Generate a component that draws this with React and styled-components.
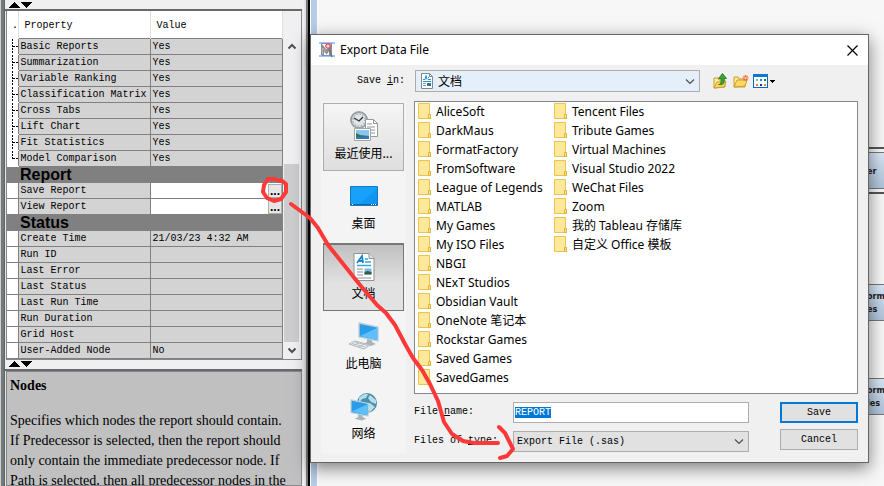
import React, { useEffect, useRef } from 'react';
import styled, { createGlobalStyle, css } from 'styled-components';

const MONO = '"Liberation Mono", monospace';
const UI = '"Noto Sans", "Noto Sans CJK SC", sans-serif';
const CJK = '"Noto Sans CJK SC", sans-serif';

const GlobalStyle = createGlobalStyle`
  *, *::before, *::after { box-sizing: border-box; }
  body { margin: 0; overflow: hidden; background: #f7f7f7; color: #000; font: 10px/16px ${MONO}; }
  button, input, select { margin: 0; padding: 0; font: inherit; color: inherit; border-radius: 0; }
`;

const Workspace = styled.main`
  position: relative;
  display: flex;
  height: 100vh;
  min-height: 480px;
  overflow: hidden;
`;

/* ---------- property panel ---------- */

const SidePanel = styled.aside`
  display: flex;
  flex: 0 0 310px;
  flex-direction: column;
  padding-left: 5px;
  padding-right: 8px;
  background: linear-gradient(90deg, #d0d0d0 0 1px, #747a7a 1px 4px, #5f6464 4px 5px, #e6e6e6 5px 302px, #f4f4f4 303px, #ddd 306px, #777 306px 308px, #000 308px 310px);
`;

const SplitBar = styled.div`
  display: flex;
  flex: none;
  height: 11px;
  padding-left: 3px;
  background: #f0f0f0;
  border-bottom: 2px solid #696969;
`;

const SplitButton = styled.button`
  display: flex;
  align-items: center;
  justify-content: center;
  width: 12px;
  height: 9px;
  border: 0;
  background: none;
`;

const PropertyFrame = styled.section`
  display: flex;
  flex: none;
  margin-left: 1px;
  border: 1px solid #828790;
  border-top: 0;
  background: #f0f0f0;
`;

const PropertyTable = styled.table`
  flex: 1;
  border-collapse: collapse;
  table-layout: fixed;
  background: #fff;
`;

const HeadCell = styled.th`
  height: 27px;
  width: ${(p) => p.$width};
  padding: 4px 0 0 ${(p) => p.$indent};
  border-right: 1px solid #e0e0e0;
  font-weight: normal;
  text-align: left;
  background: #fff;
`;

const Cell = styled.td`
  height: 16px;
  padding: 1px 0 0 1px;
  border: 1px solid #808080;
  line-height: 14px;
  white-space: nowrap;
  background: ${(p) => (p.$white ? '#fff' : '#d3d3d3')};
`;

const GutterCell = styled(Cell)`
  padding: 0;
  border-left: 0;
  border-top-color: ${(p) => (p.$tree ? '#fff' : '#808080')};
  border-bottom-color: ${(p) => (p.$tree ? '#fff' : '#808080')};
  background: #fff;
  svg { display: block; }
`;

const GroupCell = styled.td`
  height: 16px;
  padding: 0 0 0 13px;
  font: bold 16px/15px "Liberation Sans", sans-serif;
  background: #808080;
`;

const ValueLine = styled.div`
  display: flex;
  justify-content: flex-end;
  height: 14px;
`;

const EllipsisButton = styled.button`
  width: 14px;
  height: 14px;
  border: 1px solid #adadad;
  background: #e6e6e6;
  font: bold 12px/8px "Liberation Sans", sans-serif;
`;

const ScrollBar = styled.div`
  display: flex;
  flex: 0 0 18px;
  flex-direction: column;
  padding: 27px 2px 0 1px;
  background: #f0f0f0;
`;

const ScrollButton = styled.button`
  display: flex;
  flex: 0 0 17px;
  align-items: center;
  justify-content: center;
  border: 0;
  background: #f0f0f0;
`;

const ScrollTrack = styled.div`
  display: flex;
  flex: 1;
  flex-direction: column;
  justify-content: flex-end;
`;

const ScrollThumb = styled.div`
  height: 62%;
  background: #cdcdcd;
`;

const HelpText = styled.section`
  flex: 1;
  margin-left: 1px;
  padding: 4px 9px 0 3px;
  overflow: hidden;
  border: 1px solid #828790;
  background: #c0c0c0;
  font: 14px/20px "Liberation Serif", serif;
  h2 { margin: 0 0 15px; font-size: 14px; }
  p { margin: 0; }
`;

/* ---------- diagram canvas ---------- */

const Canvas = styled.section`
  position: relative;
  flex: 1;
  background: linear-gradient(90deg, #fff 0 1px, #b5cde6 1px 7px, #fff 7px 8px, #f7f7f7 8px);
`;

const DiagramNode = styled.div`
  position: absolute;
  right: 0;
  top: ${(p) => p.$top};
  width: 44px;
  height: 37px;
  padding: 5px 0 0 26px;
  border: 1px solid #777;
  border-right: 0;
  background: linear-gradient(#d8e6f5, #afc3da);
  color: #222;
  font: bold 9px/13px "DejaVu Sans Condensed", "DejaVu Sans", sans-serif;
  ${(p) => p.$selected && css`
    padding-top: 12px;
    outline: 2px solid #555;
    outline-offset: 3px;
  `}
`;

/* ---------- dialog ---------- */

const Dialog = styled.section`
  position: absolute;
  left: 310px;
  right: 15px;
  top: 34px;
  border: 1px solid #666;
  background: #f0f0f0;
  box-shadow: 0 5px 16px rgba(0, 0, 0, 0.5);
`;

const TitleBar = styled.header`
  display: flex;
  align-items: center;
  height: 30px;
  padding: 0 8px;
  gap: 5px;
  background: #fff;
  h1 { flex: 1; margin: 0; font: 12px/16px ${UI}; }
`;

const IconButton = styled.button`
  display: flex;
  align-items: center;
  justify-content: center;
  min-width: 16px;
  height: 18px;
  border: 0;
  background: none;
`;

const LocationRow = styled.div`
  display: flex;
  align-items: center;
  padding: 5px 10px 0 10px;
`;

const LocationLabel = styled.label`
  flex: 0 0 94px;
  padding-right: 10px;
  text-align: right;
`;

const ComboBox = styled.div`
  position: relative;
  flex: 1;
  height: ${(p) => (p.$location ? '22px' : '21px')};
  select {
    display: block;
    width: 100%;
    height: 100%;
    padding-left: ${(p) => (p.$location ? '22px' : '3px')};
    appearance: none;
    border: 1px solid #adadad;
    background: ${(p) => (p.$location ? '#e5eff9' : '#e1e1e1')};
    ${(p) => p.$location && css`font: 12px/18px ${CJK};`}
  }
`;

const ComboMark = styled.span`
  position: absolute;
  top: 0;
  bottom: 0;
  ${(p) => (p.$start ? 'left: 4px;' : 'right: 5px;')}
  display: flex;
  align-items: center;
  pointer-events: none;
`;

const ToolButtons = styled.div`
  display: flex;
  flex: 0 0 158px;
  gap: 4px;
  padding-left: 13px;
`;

const Content = styled.div`
  display: flex;
  gap: 8px;
  padding: 9px 10px 9px 10px;
`;

const Places = styled.nav`
  display: flex;
  flex: 0 0 85px;
  flex-direction: column;
  gap: 2px;
  padding: 2px;
  background: #f4f4f4;
`;

const PlaceButton = styled.button`
  display: flex;
  flex-direction: column;
  align-items: center;
  justify-content: flex-end;
  height: 68px;
  padding-bottom: 9px;
  border: 1px solid transparent;
  background: none;
  font: 12px/17px ${CJK};
  white-space: nowrap;
  svg { margin-bottom: 3px; }
  ${(p) => p.$look === 'hot' && css`
    border: 1px solid #adadad;
    background: linear-gradient(#f5f5f5, #dedede);
  `}
  ${(p) => p.$look === 'chosen' && css`
    border: 1px solid #777;
    border-top-width: 2px;
    background: linear-gradient(#c0c0c0, #e2e2e2 60%);
  `}
`;

const Browser = styled.div`
  flex: 1;
  min-width: 0;
`;

const FileList = styled.ul`
  display: grid;
  grid-auto-flow: column;
  grid-template-rows: repeat(15, 19px);
  grid-auto-columns: 136px;
  height: 293px;
  margin: 0;
  padding: 0 3px;
  overflow: hidden;
  border: 1px solid #828790;
  background: #fff;
  list-style: none;
`;

const FileItem = styled.li`
  display: flex;
  align-items: center;
  gap: 4px;
  font: 12px/19px ${UI};
  white-space: nowrap;
`;

const Form = styled.form`
  display: flex;
  gap: 31px;
  margin-top: 8px;
`;

const Fields = styled.div`
  display: grid;
  flex: 1;
  grid-template-columns: 99px 1fr;
  row-gap: 8px;
`;

const FieldLabel = styled.label`
  padding-top: 2px;
`;

const NameInput = styled.input`
  width: 100%;
  height: 21px;
  padding: 0 1px;
  border: 1px solid #adadad;
  outline: 0;
  background: #fff;
  &::selection { background: #0078d7; color: #fff; }
`;

const Actions = styled.div`
  display: flex;
  flex: 0 0 78px;
  flex-direction: column;
  gap: 6px;
`;

const ActionButton = styled.button`
  height: 21px;
  border: ${(p) => (p.$primary ? '2px solid #0078d7' : '1px solid #adadad')};
  background: #e1e1e1;
`;

const Annotation = styled.svg`
  position: absolute;
  left: 0;
  top: 0;
  pointer-events: none;
`;

/* ---------- drawings ---------- */

const Triangle = ({ down }) => (
  <svg width="12" height="6" viewBox="0 0 12 6" shapeRendering="crispEdges">
    <path d={down ? 'M0 0h12L6 6z' : 'M6 0l6 6H0z'} />
  </svg>
);

const Chevron = ({ up, bold }) => (
  <svg width="10" height="7" viewBox="0 0 10 7" fill="none" stroke="#505050" strokeWidth={bold ? 2 : 1.2}>
    <path d={up ? 'M1.5 5.5L5 2l3.5 3.5' : bold ? 'M1.5 1.5L5 5l3.5-3.5' : 'M1 1.5l4 4 4-4'} />
  </svg>
);

const TreeBranch = ({ last }) => (
  <svg width="11" height="15" viewBox="0 0 11 15" stroke="#000" strokeDasharray="2 1" shapeRendering="crispEdges">
    <path d={last ? 'M5.5 0v8' : 'M5.5 0v15'} />
    <path d="M6 7.5h5" />
  </svg>
);

const AppIcon = () => (
  <svg width="16" height="16" viewBox="0 0 16 16">
    <path d="M0 0h16v2H0zM0 13h16v2H0z" fill="#a6c3ec" />
    <path d="M3 1.5h10M3 13.5h10" stroke="#6f94cc" />
    <path d="M3.5 13V5l4 5 4-5v8" fill="none" stroke="#8c8c8c" strokeWidth="3" />
    <path d="M3.5 12V6l4 4" fill="none" stroke="#bcbcbc" />
    <path d="M10 6l3 9" stroke="#777" strokeWidth="1.5" />
    <circle cx="9" cy="4" r="2.2" fill="#dce6f5" stroke="#ee4852" strokeWidth="1.2" />
  </svg>
);

const CloseIcon = () => (
  <svg width="11" height="11" viewBox="0 0 11 11" stroke="#000" strokeWidth="1.2">
    <path d="M.5.5l10 10M10.5.5l-10 10" />
  </svg>
);

const PageIcon = ({ size }) => (
  <svg width={size} height={size} viewBox="0 0 28 28">
    <path d="M4 .5h15l5 5v22H4z" fill="#fff" stroke="#8d9496" />
    <path d="M19 .5v5h5" fill="#e1e5e6" stroke="#8d9496" />
    <path d="M7 10l5-7 1 7M9 8h4" fill="none" stroke="#1787c9" strokeWidth="1.8" />
    <path d="M15 6h3M15 9h6M7 12.5h14" stroke="#38a6df" strokeWidth="1.5" />
    <path d="M7 16h6M7 19h6M7 22h6M7 25h14" stroke="#8a8f92" />
    <path d="M14.5 15.5h7v6h-7z" fill="#7cb5e4" />
    <path d="M14.5 19l3-1 4 1v2.5h-7z" fill="#315e4e" />
  </svg>
);

const SmallPageIcon = () => (
  <svg width="16" height="16" viewBox="0 0 16 16">
    <path d="M2.5 .5h8l3 3v12h-11z" fill="#fff" stroke="#7f888c" />
    <path d="M10.5 .5v3h3" fill="none" stroke="#7f888c" />
    <path d="M4 6.5h2l1-4 1 4M9 4.5h1M9 6.5h3M4 8.5h8" fill="none" stroke="#1f90d0" />
    <path d="M4 10.5h3M4 12.5h3" stroke="#7a99ad" />
    <path d="M8 10h4v3H8z" fill="#2d7a8e" />
  </svg>
);

const FolderIcon = () => (
  <svg width="14" height="17" viewBox="0 0 14 17">
    <path d="M.5 .5h11v11h1v4H.5z" fill="#ffe89c" stroke="#e9c54c" />
    <path d="M10.5 15.5v-4h2v4z" fill="#ffe28a" stroke="#dfb53a" />
  </svg>
);

const OpenFolder = () => (
  <>
    <path d="M1 14V4h4l1 2h6v8z" fill="#ffec9b" stroke="#c99b2d" />
    <path d="M1 14l3-7h10l-2 6z" fill="#fbd968" stroke="#cf9d26" />
  </>
);

const UpFolderIcon = () => (
  <svg width="16" height="16" viewBox="0 0 16 16">
    <path d="M1 15V5h4l1 2h6v7z" fill="#ffec9b" stroke="#c99b2d" />
    <path d="M1 15l3-6h9l-2 5z" fill="#fbd968" stroke="#cf9d26" />
    <path d="M5.5 11.5c3 0 2.500-3 2.500-6H5.500L9.500.5l4 5h-2.300c0 4 0 7-5.700 6z" fill="#39a832" stroke="#16731b" strokeWidth=".8" />
  </svg>
);

const NewFolderIcon = () => (
  <svg width="16" height="16" viewBox="0 0 16 16">
    <OpenFolder />
    <path d="M12.5 2v6M9.500 5h6M10.500 3l4 4M14.500 3l-4 4" stroke="#f4693a" strokeWidth="1.2" />
    <circle cx="12.5" cy="5" r="1.2" fill="#ffd69a" />
  </svg>
);

const ViewMenuIcon = () => (
  <svg width="23" height="14" viewBox="0 0 23 14" shapeRendering="crispEdges">
    <path d="M.5.5h14v13H.5z" fill="#fff" stroke="#0868c8" />
    <path d="M0 0h15v3H0z" fill="#0878d8" />
    <path d="M3 5h2v2H3z" fill="#a2a2b8" />
    <path d="M7 5h2v2H7z" fill="#1687d6" />
    <path d="M11 5h2v2h-2z" fill="#168b1b" />
    <path d="M3 10h2v2H3z" fill="#ee704e" />
    <path d="M7 10h2v2H7z" fill="#123497" />
    <path d="M11 10h2v2h-2z" fill="#d49c20" />
    <path d="M17 6h5l-2.5 3z" />
  </svg>
);

const RecentIcon = () => (
  <svg width="30" height="30" viewBox="0 0 30 30">
    <circle cx="10" cy="9" r="8" fill="#dfe5e7" stroke="#9aa1a4" strokeWidth="2" />
    <circle cx="10" cy="9" r="6" fill="none" stroke="#717a7e" strokeDasharray="1 2.14" />
    <path d="M5 7l5 3 4-4" fill="none" stroke="#333" strokeWidth="1.3" />
    <path d="M16.5 8.5h8l4 4v13h-12z" fill="#fff" stroke="#929a9d" />
    <path d="M24.5 8.5v4h4M18 13h5M18 16h8M18 19h8M18 22h8" fill="none" stroke="#8f979a" />
    <path d="M5.5 17.5h16v12h-16z" fill="#fff" stroke="#a0a5a7" />
    <path d="M7 19h13v9H7z" fill="#8bc6f2" />
    <path d="M7 22l4 2 9 1v3H7z" fill="#2f735b" />
    <path d="M7 26l13-1v3H7z" fill="#3778ad" />
  </svg>
);

const DesktopIcon = () => (
  <svg width="28" height="25" viewBox="0 0 28 25">
    <path d="M.5 .5h27v19H.5z" fill="#18a1fb" stroke="#127abd" />
    <path d="M8 19L27 3v16z" fill="#0b8ee9" opacity=".6" />
    <path d="M1 18.5h26" stroke="#12669e" />
    <path d="M2 18.5h1M21 18.5h1M23 18.5h1M25 18.5h1" stroke="#fff" />
  </svg>
);

const Monitor = () => (
  <>
    <path d="M8 16l5 1v3l4 2-5 2-8-2 4-2z" fill="#a8b5bc" />
    <path d="M0 1l19 4v14L0 15z" fill="#2a9dea" stroke="#c3d0d6" strokeWidth="1.3" />
    <path d="M1 14L18 6v12z" fill="#5ec0fa" />
  </>
);

const ComputerIcon = () => (
  <svg width="32" height="30" viewBox="0 0 32 30">
    <g transform="translate(11 1)"><Monitor /></g>
    <path d="M1 23l6-3 15 4-6 4z" fill="#e9edef" stroke="#afb8bc" />
    <path d="M4 22.5l13 3.500M7 21l13 3.500M6 24.500l5-3M11 26l5-3" stroke="#a5afb4" strokeWidth=".7" />
  </svg>
);

const NetworkIcon = () => (
  <svg width="28" height="28" viewBox="0 0 28 28">
    <circle cx="17" cy="10" r="10" fill="#468fae" />
    <path d="M9 5q5-5 9-4l-2 4-4 1-3 4zM20 2l6 5v4l-5-2-3-4zM14 11l6-1 5 4-5 5-4-3z" fill="#b9dce6" />
    <g transform="translate(1 6) scale(.9)"><Monitor /></g>
  </svg>
);

/* ---------- data ---------- */

const properties = [
  { name: 'Basic Reports', value: 'Yes', tree: true },
  { name: 'Summarization', value: 'Yes', tree: true },
  { name: 'Variable Ranking', value: 'Yes', tree: true },
  { name: 'Classification Matrix', value: 'Yes', tree: true },
  { name: 'Cross Tabs', value: 'Yes', tree: true },
  { name: 'Lift Chart', value: 'Yes', tree: true },
  { name: 'Fit Statistics', value: 'Yes', tree: true },
  { name: 'Model Comparison', value: 'Yes', tree: true, last: true },
  { group: 'Report' },
  { name: 'Save Report', browse: true },
  { name: 'View Report', browse: true },
  { group: 'Status' },
  { name: 'Create Time', value: '21/03/23 4:32 AM' },
  { name: 'Run ID' },
  { name: 'Last Error' },
  { name: 'Last Status' },
  { name: 'Last Run Time' },
  { name: 'Run Duration' },
  { name: 'Grid Host' },
  { name: 'User-Added Node', value: 'No' },
];

const folders = [
  'AliceSoft', 'DarkMaus', 'FormatFactory', 'FromSoftware', 'League of Legends', 'MATLAB',
  'My Games', 'My ISO Files', 'NBGI', 'NExT Studios', 'Obsidian Vault', 'OneNote 笔记本',
  'Rockstar Games', 'Saved Games', 'SavedGames', 'Tencent Files', 'Tribute Games',
  'Virtual Machines', 'Visual Studio 2022', 'WeChat Files', 'Zoom', '我的 Tableau 存储库',
  '自定义 Office 模板',
];

const places = [
  { name: '最近使用...', icon: <RecentIcon />, look: 'hot' },
  { name: '桌面', icon: <DesktopIcon /> },
  { name: '文档', icon: <PageIcon size={28} />, look: 'chosen' },
  { name: '此电脑', icon: <ComputerIcon /> },
  { name: '网络', icon: <NetworkIcon /> },
];

const Splitter = () => (
  <SplitBar>
    <SplitButton aria-label="Collapse up"><Triangle /></SplitButton>
    <SplitButton aria-label="Collapse down"><Triangle down /></SplitButton>
  </SplitBar>
);

function PropertyRow({ item }) {
  if (item.group) {
    return <tr><GroupCell colSpan={3}>{item.group}</GroupCell></tr>;
  }
  return (
    <tr>
      <GutterCell $tree={item.tree}>{item.tree && <TreeBranch last={item.last} />}</GutterCell>
      <Cell>{item.name}</Cell>
      <Cell $white={item.browse}>
        {item.browse ? (
          <ValueLine>
            <EllipsisButton aria-label={`Browse ${item.name}`}>...</EllipsisButton>
          </ValueLine>
        ) : item.value}
      </Cell>
    </tr>
  );
}

function ExportDialog() {
  const nameRef = useRef(null);
  useEffect(() => {
    nameRef.current.focus();
    nameRef.current.select();
  }, []);

  return (
    <Dialog role="dialog" aria-labelledby="dialog-title">
      <TitleBar>
        <AppIcon />
        <h1 id="dialog-title">Export Data File</h1>
        <IconButton aria-label="Close"><CloseIcon /></IconButton>
      </TitleBar>
      <LocationRow>
        <LocationLabel htmlFor="location">Save <u>i</u>n:</LocationLabel>
        <ComboBox $location>
          <select id="location"><option>文档</option></select>
          <ComboMark $start><SmallPageIcon /></ComboMark>
          <ComboMark><Chevron /></ComboMark>
        </ComboBox>
        <ToolButtons>
          <IconButton aria-label="Up one level"><UpFolderIcon /></IconButton>
          <IconButton aria-label="New folder"><NewFolderIcon /></IconButton>
          <IconButton aria-label="View menu"><ViewMenuIcon /></IconButton>
        </ToolButtons>
      </LocationRow>
      <Content>
        <Places aria-label="Places">
          {places.map((place) => (
            <PlaceButton key={place.name} $look={place.look}>
              {place.icon}
              {place.name}
            </PlaceButton>
          ))}
        </Places>
        <Browser>
          <FileList>
            {folders.map((name) => (
              <FileItem key={name}><FolderIcon />{name}</FileItem>
            ))}
          </FileList>
          <Form onSubmit={(event) => event.preventDefault()}>
            <Fields>
              <FieldLabel htmlFor="file-name">File <u>n</u>ame:</FieldLabel>
              <NameInput id="file-name" ref={nameRef} defaultValue="REPORT" />
              <FieldLabel htmlFor="file-type">Files of <u>t</u>ype:</FieldLabel>
              <ComboBox>
                <select id="file-type"><option>Export File (.sas)</option></select>
                <ComboMark><Chevron /></ComboMark>
              </ComboBox>
            </Fields>
            <Actions>
              <ActionButton $primary type="submit">Save</ActionButton>
              <ActionButton type="button">Cancel</ActionButton>
            </Actions>
          </Form>
        </Browser>
      </Content>
    </Dialog>
  );
}

export default function App() {
  return (
    <Workspace>
      <GlobalStyle />
      <SidePanel>
        <Splitter />
        <PropertyFrame>
          <PropertyTable>
            <thead>
              <tr>
                <HeadCell $width="12px" $indent="5px">.</HeadCell>
                <HeadCell $width="132px" $indent="5px">Property</HeadCell>
                <HeadCell $width="132px" $indent="5px">Value</HeadCell>
              </tr>
            </thead>
            <tbody>
              {properties.map((item) => (
                <PropertyRow key={item.name || item.group} item={item} />
              ))}
            </tbody>
          </PropertyTable>
          <ScrollBar>
            <ScrollButton aria-label="Scroll up"><Chevron up bold /></ScrollButton>
            <ScrollTrack><ScrollThumb /></ScrollTrack>
            <ScrollButton aria-label="Scroll down"><Chevron bold /></ScrollButton>
          </ScrollBar>
        </PropertyFrame>
        <Splitter />
        <HelpText>
          <h2>Nodes</h2>
          <p>
            Specifies which nodes the report should contain. If Predecessor is selected, then the
            report should only contain the immediate predecessor node. If Path is selected, then
            all predecessor nodes in the
          </p>
        </HelpText>
      </SidePanel>
      <Canvas>
        <DiagramNode $top="152px" $selected>er</DiagramNode>
        <DiagramNode $top="284px">orm<br />es</DiagramNode>
        <DiagramNode $top="378px">orm<br />les</DiagramNode>
      </Canvas>
      <ExportDialog />
      <Annotation width="520" height="470" viewBox="0 0 520 470" fill="none" stroke="#fd3838" strokeWidth="4" strokeLinecap="round" strokeLinejoin="round">
        <path d="M283 182L275 179L268 179L264 185L263 192L267 198L274 201L281 199L286 192L286 184L281 180" />
        <path d="M291 204L310 218L318 228L328 245L340 260L360 285L377 305L386 313L395 325L405 344L413 358L422 370L430 384L438 401L444 422L452 434L463 441L474 443L498 443" />
        <path d="M499 427L505 433L509 441L513 449L507 456L500 458" />
      </Annotation>
    </Workspace>
  );
}
